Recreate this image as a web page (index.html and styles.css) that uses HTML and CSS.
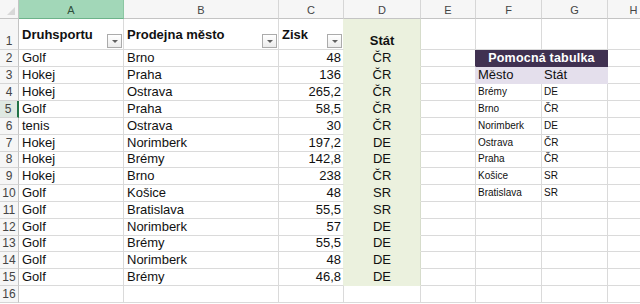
FILE: index.html
```html
<!DOCTYPE html>
<html lang="cs">
<head>
<meta charset="utf-8">
<title>Sešit</title>
<link rel="stylesheet" href="styles.css">
</head>
<body>
<div class="sheet">
  <div class="k"><span class="tri"></span></div>
  <div class="h ha">A</div><div class="h">B</div><div class="h">C</div><div class="h">D</div><div class="h">E</div><div class="h">F</div><div class="h">G</div><div class="h">H</div>

  <div class="r">1</div>
  <div class="c t"><span>Druhsportu</span><span class="fb"></span></div>
  <div class="c t"><span>Prodejna město</span><span class="fb"></span></div>
  <div class="c t cf"><span>Zisk</span><span class="fb"></span></div>
  <div class="c f m b st">Stát</div>
  <div class="c"></div><div class="c"></div><div class="c"></div><div class="c"></div>

  <div class="r">2</div>
  <div class="c">Golf</div><div class="c">Brno</div><div class="c n cf">48</div><div class="c f m">ČR</div>
  <div class="c ep"></div><div class="c pu">Pomocná tabulka</div><div class="c"></div>

  <div class="r">3</div>
  <div class="c">Hokej</div><div class="c">Praha</div><div class="c n cf">136</div><div class="c f m">ČR</div>
  <div class="c el"></div><div class="c lv">Město</div><div class="c lv lv2">Stát</div><div class="c"></div>

  <div class="r">4</div>
  <div class="c">Hokej</div><div class="c">Ostrava</div><div class="c n cf">265,2</div><div class="c f m">ČR</div>
  <div class="c"></div><div class="c s">Brémy</div><div class="c s">DE</div><div class="c"></div>

  <div class="r sel">5</div>
  <div class="c">Golf</div><div class="c">Praha</div><div class="c n cf">58,5</div><div class="c f m">ČR</div>
  <div class="c"></div><div class="c s">Brno</div><div class="c s">ČR</div><div class="c"></div>

  <div class="r">6</div>
  <div class="c">tenis</div><div class="c">Ostrava</div><div class="c n cf">30</div><div class="c f m">ČR</div>
  <div class="c"></div><div class="c s">Norimberk</div><div class="c s">DE</div><div class="c"></div>

  <div class="r">7</div>
  <div class="c">Hokej</div><div class="c">Norimberk</div><div class="c n cf">197,2</div><div class="c f m">DE</div>
  <div class="c"></div><div class="c s">Ostrava</div><div class="c s">ČR</div><div class="c"></div>

  <div class="r">8</div>
  <div class="c">Hokej</div><div class="c">Brémy</div><div class="c n cf">142,8</div><div class="c f m">DE</div>
  <div class="c"></div><div class="c s">Praha</div><div class="c s">ČR</div><div class="c"></div>

  <div class="r">9</div>
  <div class="c">Hokej</div><div class="c">Brno</div><div class="c n cf">238</div><div class="c f m">ČR</div>
  <div class="c"></div><div class="c s">Košice</div><div class="c s">SR</div><div class="c"></div>

  <div class="r">10</div>
  <div class="c">Golf</div><div class="c">Košice</div><div class="c n cf">48</div><div class="c f m">SR</div>
  <div class="c"></div><div class="c s">Bratislava</div><div class="c s">SR</div><div class="c"></div>

  <div class="r">11</div>
  <div class="c">Golf</div><div class="c">Bratislava</div><div class="c n cf">55,5</div><div class="c f m">SR</div>
  <div class="c"></div><div class="c"></div><div class="c"></div><div class="c"></div>

  <div class="r">12</div>
  <div class="c">Golf</div><div class="c">Norimberk</div><div class="c n cf">57</div><div class="c f m">DE</div>
  <div class="c"></div><div class="c"></div><div class="c"></div><div class="c"></div>

  <div class="r">13</div>
  <div class="c">Golf</div><div class="c">Brémy</div><div class="c n cf">55,5</div><div class="c f m">DE</div>
  <div class="c"></div><div class="c"></div><div class="c"></div><div class="c"></div>

  <div class="r">14</div>
  <div class="c">Golf</div><div class="c">Norimberk</div><div class="c n cf">48</div><div class="c f m">DE</div>
  <div class="c"></div><div class="c"></div><div class="c"></div><div class="c"></div>

  <div class="r">15</div>
  <div class="c">Golf</div><div class="c">Brémy</div><div class="c n cf">46,8</div><div class="c f m">DE</div>
  <div class="c"></div><div class="c"></div><div class="c"></div><div class="c"></div>

  <div class="r">16</div>
  <div class="c"></div><div class="c"></div><div class="c"></div><div class="c"></div>
  <div class="c"></div><div class="c"></div><div class="c"></div><div class="c"></div>
</div>
</body>
</html>
```

FILE: styles.css
```css
html, body {
  margin: 0;
  padding: 0;
  background: #ffffff;
  overflow: hidden;
  width: 640px;
  height: 304px;
}

.sheet {
  display: grid;
  width: 660px;
  grid-template-columns: 19px 105px 155px 65px 77px 55px 66px 66px 52px;
  grid-template-rows: 19px 31px repeat(6, 17px) 16px repeat(4, 17px) 16px repeat(3, 17px);
  font-family: "Liberation Sans", Arial, sans-serif;
  font-size: 13px;
  color: #111;
}

.sheet > div {
  box-sizing: border-box;
  min-width: 0;
  overflow: hidden;
  white-space: nowrap;
}

/* corner */
.k {
  background: #f6f6f6;
  border-right: 1px solid #c4c4c4;
  border-bottom: 1px solid #c4c4c4;
  position: relative;
}
.tri {
  position: absolute;
  right: 3px;
  bottom: 3px;
  width: 0;
  height: 0;
  border-left: 8px solid transparent;
  border-bottom: 8px solid #d8d8d8;
}

/* column headers */
.h {
  background: #f6f6f6;
  border-right: 1px solid #d6d6d6;
  border-bottom: 1px solid #c4c4c4;
  color: #444;
  font-size: 11px;
  display: flex;
  align-items: center;
  justify-content: center;
  padding-top: 1px;
}
.ha {
  background: #a2d7b8;
  border-right-color: #8cc7a3;
  border-bottom: 1px solid #6db38a;
  color: #2f4f3c;
}

/* row headers */
.r {
  background: #f6f6f6;
  border-right: 1px solid #c4c4c4;
  border-bottom: 1px solid #d6d6d6;
  color: #444;
  font-size: 12px;
  line-height: 14px;
  display: flex;
  align-items: flex-end;
  justify-content: center;
  padding-bottom: 1px;
}
.sel {
  background: #dfe9e2;
  border-right: 2px solid #217346;
  padding-right: 1px;
}

/* cells */
.c {
  border-right: 1px solid #dadada;
  border-bottom: 1px solid #dadada;
  display: flex;
  align-items: flex-end;
  padding: 0 3px 1px 3px;
  line-height: 14px;
}
.n { justify-content: flex-end; padding-right: 2px; }
.m { justify-content: center; }
.b { font-weight: bold; }
.cf { border-right-color: #ebf1de; }
.f {
  background: #ebf1de;
  border-bottom-color: #ebf1de;
  border-right-color: #d6dccb;
}
.st { padding-bottom: 1px; }

/* table headers with filter buttons */
.t {
  font-weight: bold;
  padding: 0 1px 1px 3px;
}
.t > span:first-child {
  padding-bottom: 6px;
}
.fb {
  margin-left: auto;
  flex: none;
  width: 15px;
  height: 14px;
  box-sizing: border-box;
  border: 1px solid #ababab;
  background: linear-gradient(#ffffff, #ececec);
  position: relative;
}
.fb::after {
  content: "";
  position: absolute;
  left: 4px;
  top: 5px;
  border-left: 3px solid transparent;
  border-right: 3px solid transparent;
  border-top: 3px solid #606060;
}

/* helper table */
.ep { border-right-color: #403151; }
.el { border-right-color: #e4dfec; }
.pu {
  grid-column: span 2;
  background: #403151;
  border-right-color: #403151;
  border-bottom-color: #403151;
  color: #ffffff;
  font-weight: bold;
  font-size: 12.5px;
  letter-spacing: 0.2px;
  justify-content: center;
}
.lv {
  background: #e4dfec;
  border-right-color: #e4dfec;
  border-bottom-color: #e4dfec;
  padding-left: 2px;
}
.s {
  font-size: 10px;
  line-height: 12px;
  padding-left: 2px;
  padding-bottom: 2px;
}
```
